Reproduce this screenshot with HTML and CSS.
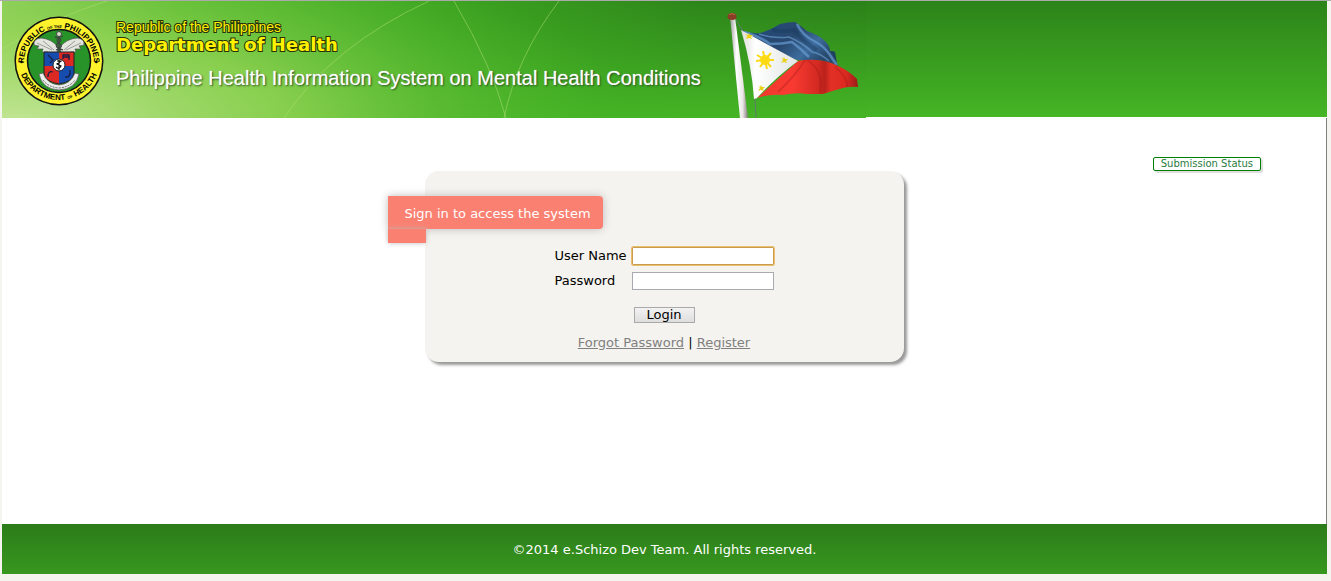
FILE: index.html
```html
<!DOCTYPE html>
<html lang="en">
<head>
<meta charset="utf-8">
<title>Philippine Health Information System on Mental Health Conditions</title>
<link rel="stylesheet" href="styles.css">
</head>
<body>
<div class="page">
  <header class="banner">
    <div class="banner-art">
      <svg class="banner-lines" viewBox="0 0 864 117" preserveAspectRatio="none" aria-hidden="true">
        <defs>
          <radialGradient id="glow" gradientUnits="userSpaceOnUse" cx="0" cy="0" r="1" gradientTransform="translate(10 120) scale(620 190)">
            <stop offset="0" stop-color="#c3e696" stop-opacity=".95"/>
            <stop offset=".45" stop-color="#93d455" stop-opacity=".8"/>
            <stop offset="1" stop-color="#4fb82b" stop-opacity="0"/>
          </radialGradient>
          <linearGradient id="leftLight" x1="0" x2="1" y1="0" y2="0">
            <stop offset="0" stop-color="#a2d56c"/>
            <stop offset=".2" stop-color="#62c034" stop-opacity=".95"/>
            <stop offset=".5" stop-color="#43b024" stop-opacity=".75"/>
            <stop offset=".8" stop-color="#43b024" stop-opacity=".1"/>
            <stop offset="1" stop-color="#43b024" stop-opacity="0"/>
          </linearGradient>
        </defs>
        <rect width="864" height="117" fill="url(#leftLight)"/>
        <rect width="864" height="117" fill="url(#glow)"/>
        <path d="M0 48Q50 17 105 0M282 117Q330 45 427 0M452 0Q490 65 504 117M557 0Q515 55 502 117" fill="none" stroke="#b3e077" stroke-opacity=".5"/>
      </svg>
      <svg class="seal" viewBox="0 0 90 90" role="img" aria-label="Department of Health seal">
        <defs>
          <path id="arcTop" d="M10 47A35 35 0 1 1 80 47"/>
          <path id="arcBottom" d="M4 43A41 41 0 1 0 86 43"/>
        </defs>
        <circle cx="45" cy="45" r="44.500" fill="#111"/>
        <circle cx="45" cy="45" r="43" fill="#fdf22c"/>
        <circle cx="45" cy="45" r="31.500" fill="#289329" stroke="#111" stroke-width="1.500"/>
        <text class="seal-text"><textPath href="#arcTop" startOffset="50%" text-anchor="middle">REPUBLIC <tspan class="seal-small">OF THE</tspan> PHILIPPINES</textPath></text>
        <text class="seal-text"><textPath href="#arcBottom" startOffset="50%" text-anchor="middle">DEPARTMENT <tspan class="seal-small">OF</tspan> HEALTH</textPath></text>
        <circle cx="7.500" cy="46" r="1.200"/><circle cx="82.500" cy="46" r="1.200"/>
        <path d="M44 31Q38 23 27 22Q19 23 20 29L25 30L23 33L29 33L28 36L34 36L36 39L43 38ZM46 31Q52 23 63 22Q71 23 70 29L65 30L67 33L61 33L62 36L56 36L54 39L47 38Z" fill="#e5e5df" stroke="#555" stroke-width=".7"/>
        <path d="M23 27L38 34M29 25L40 34M67 27L52 34M61 25L50 34" stroke="#888" stroke-width=".8"/>
        <path d="M30 36H45V50H30Z" fill="#164cae"/><path d="M45 36H60V50H45Z" fill="#dd2924"/>
        <path d="M30 50H45V68Q31 66 30 57Z" fill="#dd2924"/><path d="M45 50H60V57Q59 66 45 68Z" fill="#164cae"/>
        <path d="M30 36H60V57Q59 66 45 68Q31 66 30 57Z" fill="none" stroke="#222"/>
        <path d="M34 39L39 44L36 47M49 43V39H55V44M49 41H56M34 61Q34 54 39 56M51 61Q57 62 56 54" fill="none" stroke="#172044" stroke-width="1.300"/>
        <path d="M45 17V37M41 21Q51 23 44 27Q39 31 49 34M49 20Q39 23 46 28Q50 31 42 34" fill="none" stroke="#3e4540" stroke-width="1.300"/>
        <circle cx="45" cy="18" r="2.500" fill="#d6d9cc" stroke="#444"/>
        <circle cx="45" cy="49" r="6" fill="#fff" stroke="#222"/>
        <path d="M45 44V54M43 45H47L43 48L47 50Q45 54 42 51" fill="none" stroke="#111" stroke-width="1.200"/>
        <path d="M25 58L29 57Q33 68 45 69Q57 68 61 57L65 58Q62 73 45 74Q28 73 25 58Z" fill="#eee" stroke="#555" stroke-width=".7"/>
        <path d="M29 64Q34 71 45 72Q56 71 61 64" fill="none" stroke="#666" stroke-width="1" stroke-dasharray="2 1"/>
      </svg>
      <div class="titles">
        <div class="republic">Republic of the Philippines</div>
        <div class="department">Department of Health</div>
        <h1 class="system">Philippine Health Information System on Mental Health Conditions</h1>
      </div>
      <svg class="flag" viewBox="0 0 140 108" role="img" aria-label="Philippine flag">
        <defs>
          <linearGradient id="pole" x1="0" x2="1"><stop offset="0" stop-color="#999"/><stop offset=".35" stop-color="#fff"/><stop offset=".7" stop-color="#ece8e8"/><stop offset="1" stop-color="#83777a"/></linearGradient>
          <linearGradient id="blue" x1="0" x2="1" y2=".5"><stop offset="0" stop-color="#3f6f9f"/><stop offset=".25" stop-color="#254a78"/><stop offset=".55" stop-color="#28496f"/><stop offset=".8" stop-color="#3d6c9d"/><stop offset="1" stop-color="#27496c"/></linearGradient>
          <linearGradient id="red" x1="0" x2="1"><stop offset="0" stop-color="#ef3a2d"/><stop offset=".35" stop-color="#f93a32"/><stop offset=".6" stop-color="#d42a22"/><stop offset=".67" stop-color="#b9211b"/><stop offset=".73" stop-color="#e23026"/><stop offset=".88" stop-color="#dc2a21"/><stop offset="1" stop-color="#9b1c18"/></linearGradient>
          <linearGradient id="white" x1="0" x2="1"><stop offset="0" stop-color="#dcdcda"/><stop offset=".25" stop-color="#fff"/><stop offset="1" stop-color="#e2e5e5"/></linearGradient>
        </defs>
        <path d="M10 10L17 21M29 87L30 108" stroke="#5e7c72" fill="none"/>
        <path d="M4 7H9L22 108H14Z" fill="url(#pole)"/>
        <ellipse cx="6" cy="6.500" rx="4.500" ry="3.500" fill="#883d26"/><path d="M3 4.500Q6 3 9 4.500" stroke="#c2663f" fill="none"/>
        <path d="M102 42Q106 40 109 42L111 53V57L104 50Z" fill="#1f4060"/>
        <path d="M15 20Q24 24 34 23Q45 20 54 14Q62 12 69 12Q74 15 81 21Q93 25 99 31Q104 36 104 41Q110 49 112 56Q101 51 91 50H72L62 48Z" fill="url(#blue)"/>
        <path d="M18 22Q35 27 44 34Q56 34 66 32Q74 38 83 47M71 14Q76 25 88 31Q98 36 104 45Q107 50 111 55" fill="none" stroke="#669bd2" stroke-width="2.500" opacity=".7"/>
        <path d="M33 24Q48 29 63 27Q77 33 86 42Q94 43 103 51" fill="none" stroke="#6fa2d3" stroke-width="1.500" opacity=".6"/>
        <path d="M46 20Q60 22 68 20Q76 31 91 40" fill="none" stroke="#16395c" stroke-width="4" opacity=".4"/>
        <path d="M72 51Q81 49 91 50Q103 51 112 56Q122 60 131 69L132 77Q125 76 117 78Q106 81 97 84H81Q70 82 57 85Q43 84 31 88Z" fill="url(#red)"/>
        <path d="M81 50Q98 60 94 83M79 50Q70 65 52 82M109 57Q122 67 121 77" fill="none" stroke="#981713" stroke-width="2" opacity=".3"/>
        <path d="M15 20L72 51Q50 67 31 88L28 89Q26 56 15 20Z" fill="url(#white)"/>
        <circle cx="39" cy="50" r="5" fill="#ffdf18"/>
        <path d="M39 50L37 41M39 50L45 43M39 50L48 50M39 50L45 57M39 50L41 59M39 50L34 57M39 50L30 51M39 50L31 45" stroke="#fbd914" stroke-width="2"/>
        <path d="M23 23L24 25L27 25L25 27L26 29L23 28L20 29L21 26L19 24L22 25ZM58 47L59 49L62 49L60 51L61 53L58 52L55 53L57 50L55 48L57 49ZM35 75L36 77L39 77L37 79L38 81L35 80L32 81L34 78L32 76L34 77Z" fill="#e9d21d"/>
      </svg>
    </div>
  </header>
  <main class="content">
    <div class="toolbar"><button class="status" type="button">Submission Status</button></div>
    <section class="card">
      <h2 class="ribbon">Sign in to access the system</h2>
      <div class="ribbon-fold"></div>
      <form class="login">
        <div class="fields">
          <label for="user">User Name</label><input id="user" class="field focused" type="text">
          <label for="password">Password</label><input id="password" class="field" type="password">
        </div>
        <button class="submit" type="button">Login</button>
        <div class="links"><a href="#">Forgot Password</a> | <a href="#">Register</a></div>
      </form>
    </section>
  </main>
  <footer class="footer">©2014 e.Schizo Dev Team. All rights reserved.</footer>
</div>
</body>
</html>
```
FILE: styles.css
```css
* { box-sizing: border-box; }

body {
  margin: 0;
  background: #f5f4ef;
  border-top: 1px solid #aaa;
  color: #000;
  font: 13px/16px Verdana, "DejaVu Sans", sans-serif;
}

.page {
  display: flex;
  flex-direction: column;
  min-height: calc(100vh - 1px);
  padding: 0 4px 7px 2px;
}

.banner {
  background: linear-gradient(#2c8319, #45b525) 0 0 / 100% 116px no-repeat #fff;
}

.banner-art {
  position: relative;
  display: flex;
  width: 864px;
  max-width: 100%;
  height: 117px;
  background: linear-gradient(#2b8119, #45b525);
}

.banner-lines {
  position: absolute;
  inset: 0;
  width: 100%;
  height: 100%;
}

.seal {
  position: relative;
  flex: none;
  width: 90px;
  height: 90px;
  margin: 15px 0 0 12px;
}

.seal-text { font: bold 8px "Liberation Sans", Arial, sans-serif; }
.seal-small { font-size: 4px; }

.titles {
  position: relative;
  flex: 1;
  padding: 18px 0 0 12px;
  font-family: "Liberation Sans", Arial, sans-serif;
  white-space: nowrap;
}

.republic, .department {
  color: #fff200;
  -webkit-text-stroke: 2px #26300a;
  paint-order: stroke fill;
}

.republic { font-size: 14px; line-height: 16px; }
.department { font: bold 18px/20px "DejaVu Sans", Verdana, sans-serif; }

.system {
  margin: 11px 0 0;
  color: #fff;
  font-size: 20px;
  font-weight: normal;
  line-height: 24px;
  text-shadow: 1px 1px 2px #234d18, 0 0 1px #fff;
}

.flag {
  position: relative;
  flex: none;
  width: 140px;
  height: 108px;
  margin: 9px 0 0;
}

.content {
  flex: 1;
  background: #fff;
  border-right: 1px solid #808080;
}

.toolbar {
  display: flex;
  justify-content: flex-end;
  padding: 39px 65px 0 0;
}

.status {
  height: 14px;
  padding: 0 7px;
  border: 1px solid #008000;
  border-radius: 2px;
  background: #fff;
  box-shadow: 2px 2px 1px #ddd;
  color: #2b7c41;
  font: 10px/12px Verdana, "DejaVu Sans", sans-serif;
}

.card {
  width: 479px;
  max-width: 100%;
  margin: 0 auto;
  padding: 25px 0 11px;
  border-radius: 14px;
  background: #f4f3ef;
  box-shadow: 3px 3px 3px #999;
}

.ribbon {
  width: fit-content;
  margin: 0 0 0 -37px;
  padding: 10px 12px 7px 17px;
  border-radius: 0 4px 4px 0;
  background: #fa8072;
  box-shadow: 0 0 8px #bbb;
  color: #fff;
  font-size: 13px;
  font-weight: normal;
  line-height: 16px;
}

.ribbon-fold {
  width: 38px;
  height: 14px;
  margin-left: -37px;
  background: #fa8072;
  box-shadow: 0 0 5px #bbb;
}

.login {
  display: flex;
  flex-direction: column;
  align-items: center;
  padding-top: 4px;
}

.fields {
  display: grid;
  grid-template-columns: 70px 142px;
  gap: 7px;
  line-height: 18px;
  white-space: nowrap;
}

.field {
  width: 142px;
  height: 18px;
  padding: 1px 2px;
  border: 1px solid #a9a9b0;
  background: #fff;
  font: 13px/14px Verdana, "DejaVu Sans", sans-serif;
}

.focused {
  border-color: #c99b4c;
  border-radius: 1px;
  outline: 1px solid #eabf70;
}

.submit {
  width: 61px;
  height: 16px;
  margin-top: 17px;
  padding: 0;
  border: 1px solid #a9a9a9;
  background: linear-gradient(#f2f2f2, #dedede);
  color: #000;
  font: 13px/14px Verdana, "DejaVu Sans", sans-serif;
}

.links { margin-top: 12px; }
.links a { color: #808080; }

.footer {
  padding: 18px 0 16px;
  background: linear-gradient(#2c7c19, #37971f);
  color: #fff;
  text-align: center;
}
```
